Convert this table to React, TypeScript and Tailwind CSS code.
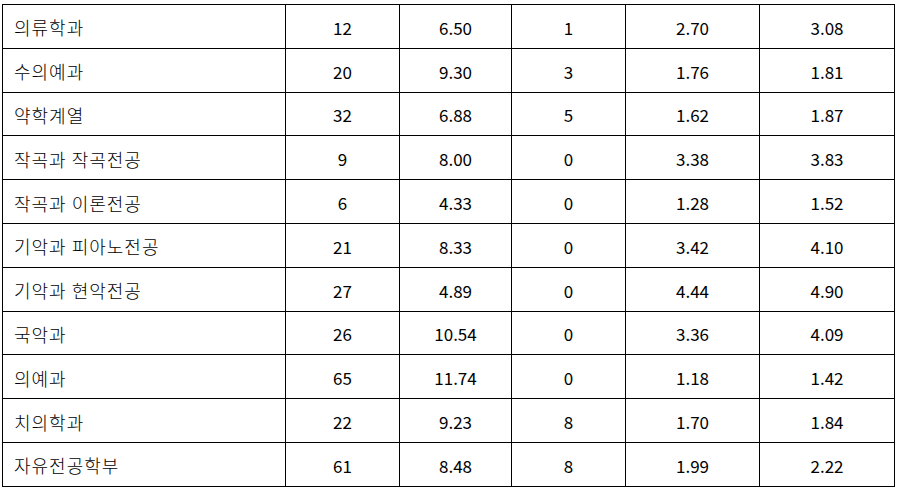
import React from "react";

const rows: [string, string, string, string, string, string][] = [
  ["의류학과", "12", "6.50", "1", "2.70", "3.08"],
  ["수의예과", "20", "9.30", "3", "1.76", "1.81"],
  ["약학계열", "32", "6.88", "5", "1.62", "1.87"],
  ["작곡과 작곡전공", "9", "8.00", "0", "3.38", "3.83"],
  ["작곡과 이론전공", "6", "4.33", "0", "1.28", "1.52"],
  ["기악과 피아노전공", "21", "8.33", "0", "3.42", "4.10"],
  ["기악과 현악전공", "27", "4.89", "0", "4.44", "4.90"],
  ["국악과", "26", "10.54", "0", "3.36", "4.09"],
  ["의예과", "65", "11.74", "0", "1.18", "1.42"],
  ["치의학과", "22", "9.23", "8", "1.70", "1.84"],
  ["자유전공학부", "61", "8.48", "8", "1.99", "2.22"],
];

export default function App() {
  return (
    <div
      className="w-[900px] h-[491px] overflow-hidden bg-white text-black pt-[4px] pl-[2px]"
      style={{ fontFamily: '"Noto Sans CJK KR", "Noto Sans", sans-serif' }}
    >
      <div className="grid grid-cols-[283px_114px_112px_114px_134px_135px] auto-rows-[43.8px] border-l border-t border-black w-[893px] text-[17px] leading-none">
        {rows.map((r, i) => (
          <React.Fragment key={i}>
            <div className="border-r border-b border-black flex items-center pl-[11px] pt-[2px] text-[18px] tracking-[1px] font-light">
              {r[0]}
            </div>
            {r.slice(1).map((v, j) => (
              <div
                key={j}
                className="border-r border-b border-black flex items-center justify-center pt-[2px]"
              >
                {v}
              </div>
            ))}
          </React.Fragment>
        ))}
      </div>
    </div>
  );
}
